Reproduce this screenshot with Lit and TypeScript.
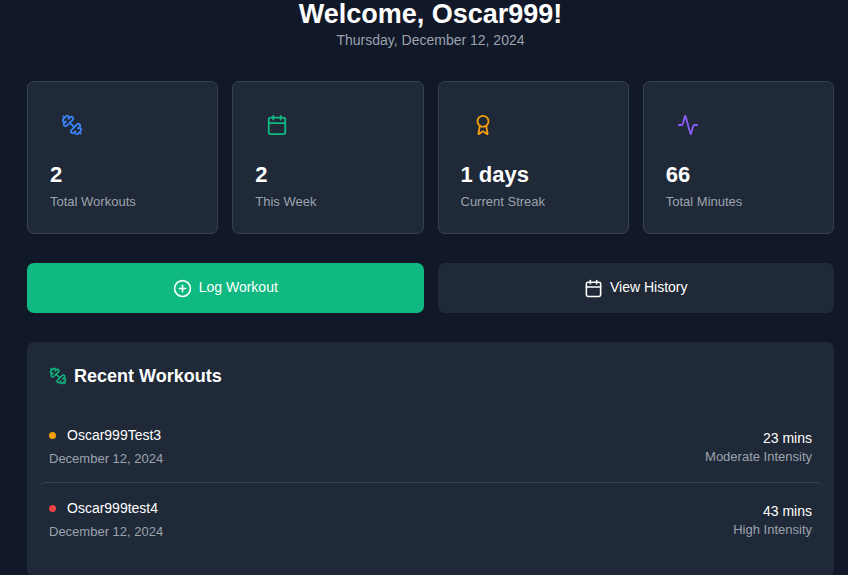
import { LitElement, html, svg, css } from "lit";
import { customElement, property } from "lit/decorators.js";
import { classMap } from "lit/directives/class-map.js";

const icons = {
  dumbbell: svg`
    <path d="M14.4 14.4 9.6 9.6"/>
    <path d="M18.657 21.485a2 2 0 1 1-2.829-2.828l-1.767 1.768a2 2 0 1 1-2.829-2.829l6.364-6.364a2 2 0 1 1 2.829 2.829l-1.768 1.767a2 2 0 1 1 2.828 2.829z"/>
    <path d="m21.5 21.5-1.4-1.4"/>
    <path d="M3.9 3.9 2.5 2.5"/>
    <path d="M6.404 12.768a2 2 0 1 1-2.829-2.829l1.768-1.767a2 2 0 1 1-2.828-2.829l2.828-2.828a2 2 0 1 1 2.829 2.828l1.767-1.768a2 2 0 1 1 2.829 2.829z"/>`,
  calendar: svg`
    <path d="M8 2v4"/>
    <path d="M16 2v4"/>
    <rect width="18" height="18" x="3" y="4" rx="2"/>
    <path d="M3 10h18"/>`,
  award: svg`
    <path d="m15.477 12.89 1.515 8.526a.5.5 0 0 1-.81.47l-3.58-2.687a1 1 0 0 0-1.197 0l-3.586 2.686a.5.5 0 0 1-.81-.469l1.514-8.526"/>
    <circle cx="12" cy="8" r="6"/>`,
  activity: svg`
    <path d="M22 12h-2.48a2 2 0 0 0-1.93 1.46l-2.35 8.36a.25.25 0 0 1-.48 0L9.24 2.18a.25.25 0 0 0-.48 0l-2.35 8.36A2 2 0 0 1 4.49 12H2"/>`,
  plus: svg`
    <circle cx="12" cy="12" r="10"/>
    <path d="M8 12h8"/>
    <path d="M12 8v8"/>`,
};

type IconName = keyof typeof icons;

@customElement("line-icon")
export class LineIcon extends LitElement {
  @property() name: IconName = "dumbbell";

  static styles = css`
    :host {
      display: block;
      flex: none;
      width: 22px;
      height: 22px;
    }
    .icon {
      display: block;
      width: 100%;
      height: 100%;
      fill: none;
      stroke: currentColor;
      stroke-width: 2;
      stroke-linecap: round;
      stroke-linejoin: round;
    }
  `;

  render() {
    return html`<svg class="icon" viewBox="0 0 24 24" aria-hidden="true">${icons[this.name]}</svg>`;
  }
}

interface Stat {
  icon: IconName;
  tone: "blue" | "green" | "amber" | "violet";
  value: string;
  label: string;
}

interface Workout {
  name: string;
  date: string;
  minutes: number;
  intensity: "Moderate" | "High";
}

@customElement("app-root")
export class AppRoot extends LitElement {
  stats: Stat[] = [
    { icon: "dumbbell", tone: "blue", value: "2", label: "Total Workouts" },
    { icon: "calendar", tone: "green", value: "2", label: "This Week" },
    { icon: "award", tone: "amber", value: "1 days", label: "Current Streak" },
    { icon: "activity", tone: "violet", value: "66", label: "Total Minutes" },
  ];

  workouts: Workout[] = [
    { name: "Oscar999Test3", date: "December 12, 2024", minutes: 23, intensity: "Moderate" },
    { name: "Oscar999test4", date: "December 12, 2024", minutes: 43, intensity: "High" },
  ];

  static styles = css`
    :host {
      display: block;
      box-sizing: border-box;
      min-height: 100vh;
      padding: 0 14px 0 27px;
      background: #111827;
      color: #fff;
      font-family: "Liberation Sans", Arial, sans-serif;
      font-size: 14px;
      line-height: 20px;
    }
    * {
      box-sizing: border-box;
    }
    h1,
    h2,
    p,
    ul {
      margin: 0;
      padding: 0;
    }
    .header {
      text-align: center;
      margin-bottom: 31px;
    }
    .title {
      font-size: 27px;
      line-height: 28px;
      margin-bottom: 2px;
    }
    .muted {
      color: #9ca3af;
    }
    .small {
      font-size: 13px;
      line-height: 18px;
    }
    .stats {
      display: grid;
      grid-template-columns: repeat(4, 1fr);
      gap: 14px;
      margin-bottom: 29px;
    }
    .stat {
      padding: 22px;
      border: 1px solid #374151;
      border-radius: 7px;
      background: #1f2937;
    }
    .badge {
      display: inline-flex;
      vertical-align: top;
      padding: 10px 11px;
      margin-bottom: 14px;
    }
    .blue { color: #3b82f6; }
    .green { color: #10b981; }
    .amber { color: #f59e0b; }
    .violet { color: #8b5cf6; }
    .value {
      font-size: 22px;
      line-height: 30px;
      font-weight: 700;
      margin-bottom: 3px;
    }
    .actions {
      display: grid;
      grid-template-columns: 1fr 1fr;
      gap: 14px;
      margin-bottom: 29px;
    }
    .action {
      display: flex;
      align-items: center;
      justify-content: center;
      gap: 7px;
      padding: 14px;
      border: 0;
      border-radius: 7px;
      background: #1f2937;
      color: inherit;
      font: inherit;
      cursor: pointer;
    }
    .primary {
      background: #10b981;
    }
    .action line-icon {
      width: 19px;
      height: 19px;
    }
    .caption {
      padding-bottom: 2px;
    }
    .recent {
      padding: 22px 11px;
      border-radius: 7px;
      background: #1f2937;
    }
    .heading {
      display: flex;
      align-items: center;
      gap: 7px;
      padding: 0 11px;
      margin-bottom: 22px;
      font-size: 18px;
      line-height: 24px;
    }
    .heading line-icon {
      width: 18px;
      height: 18px;
    }
    .list {
      list-style: none;
    }
    .item {
      display: flex;
      align-items: center;
      justify-content: space-between;
      padding: 15px 11px 14px;
      border-radius: 7px;
    }
    .item + .item {
      border-top: 1px solid #374151;
    }
    .name {
      display: flex;
      align-items: center;
      gap: 11px;
      margin-bottom: 5px;
    }
    .dot {
      width: 7px;
      height: 7px;
      border-radius: 50%;
      background: #f59e0b;
    }
    .high {
      background: #ef4444;
    }
    .amount {
      text-align: right;
    }
  `;

  render() {
    return html`
      <header class="header">
        <h1 class="title">Welcome, Oscar999!</h1>
        <p class="muted">Thursday, December 12, 2024</p>
      </header>

      <section class="stats">
        ${this.stats.map(
          (s) => html`
            <div class="stat">
              <span class="badge ${s.tone}"><line-icon name=${s.icon}></line-icon></span>
              <p class="value">${s.value}</p>
              <p class="muted small">${s.label}</p>
            </div>
          `
        )}
      </section>

      <div class="actions">
        <button class="action primary" type="button">
          <line-icon name="plus"></line-icon><span class="caption">Log Workout</span>
        </button>
        <button class="action" type="button">
          <line-icon name="calendar"></line-icon><span class="caption">View History</span>
        </button>
      </div>

      <section class="recent">
        <h2 class="heading">
          <line-icon class="green" name="dumbbell"></line-icon>Recent Workouts
        </h2>
        <ul class="list">
          ${this.workouts.map(
            (w) => html`
              <li class="item">
                <div>
                  <p class="name">
                    <span class=${classMap({ dot: true, high: w.intensity === "High" })}></span>${w.name}
                  </p>
                  <p class="muted small">${w.date}</p>
                </div>
                <div class="amount">
                  <p>${w.minutes} mins</p>
                  <p class="muted small">${w.intensity} Intensity</p>
                </div>
              </li>
            `
          )}
        </ul>
      </section>
    `;
  }
}
